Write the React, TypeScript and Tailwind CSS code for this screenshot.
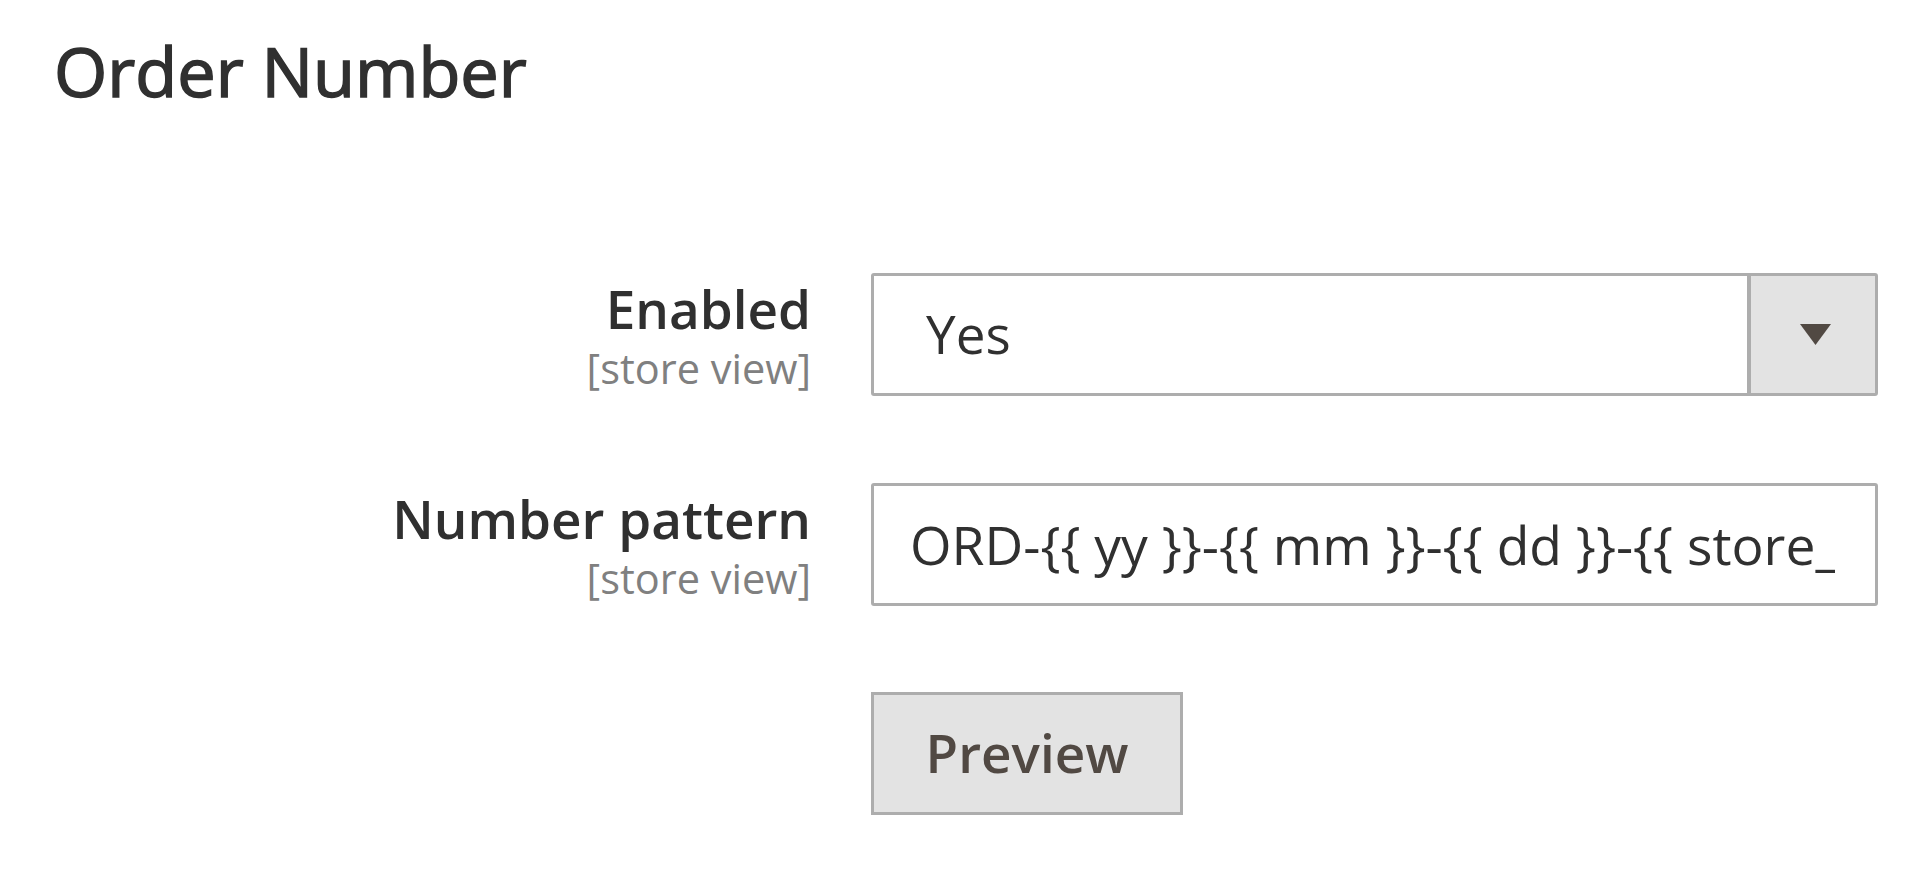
import React from "react";

const font = { fontFamily: '"Open Sans", "Noto Sans", sans-serif' };

function FieldLabel({ title }: { title: string }) {
  return (
    <div className="flex flex-col items-end pt-[9px] text-right">
      <span className="text-[53px] font-semibold leading-none text-[#303030]">{title}</span>
      <span className="mt-[13px] text-[41.5px] leading-none text-[#808080]">[store view]</span>
    </div>
  );
}

export default function App() {
  return (
    <div className="min-h-screen w-full bg-white" style={font}>
      {/* Section title */}
      <h1 className="pl-[54px] pt-[37px] text-[68.5px] font-normal leading-none text-[#303030] [-webkit-text-stroke:1.5px_#303030]">
        Order Number
      </h1>

      <div className="mt-[167px] grid grid-cols-[811px_1007px] gap-x-[60px]">
        {/* Enabled */}
        <FieldLabel title="Enabled" />
        <div className="flex h-[123px] rounded-[3px] border-[3px] border-[#adadad] bg-white">
          <div className="flex flex-1 items-center pl-[52px] text-[53px] text-[#303030]">Yes</div>
          <div className="flex w-[128px] items-center justify-center border-l-[4px] border-[#adadad] bg-[#e3e3e3]">
            <svg width="31" height="21" viewBox="0 0 31 21" className="ml-[4px]">
              <path d="M0 0 H31 L15.5 21 Z" fill="#514943" />
            </svg>
          </div>
        </div>

        {/* Number pattern */}
        <div className="mt-[87px]">
          <FieldLabel title="Number pattern" />
        </div>
        <div className="mt-[87px]">
          <input
            readOnly
            value="ORD-{{ yy }}-{{ mm }}-{{ dd }}-{{ store_id }}-{{ counter }}"
            className="h-[123px] w-full rounded-[3px] border-[3px] border-[#adadad] bg-white pl-[36px] pr-[40px] text-[53.4px] text-[#303030] outline-none"
            style={font}
          />
        </div>

        {/* Preview */}
        <div />
        <div className="mt-[86px]">
          <button className="h-[123px] w-[312px] border-[3px] border-[#adadad] bg-[#e3e3e3] text-[53px] font-semibold text-[#514943]">
            Preview
          </button>
        </div>
      </div>
    </div>
  );
}
